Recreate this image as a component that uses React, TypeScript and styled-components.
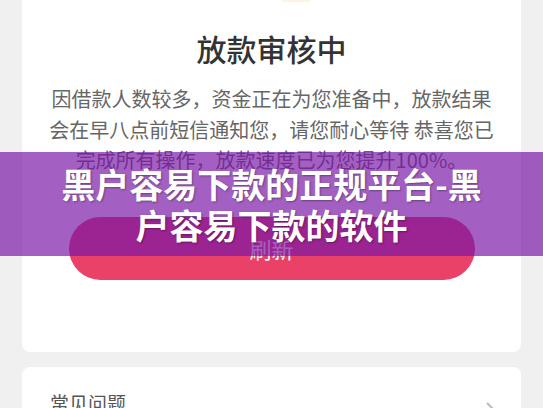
import React from 'react';
import styled, { createGlobalStyle } from 'styled-components';

const GlobalStyle = createGlobalStyle`
  html, body {
    margin: 0;
    padding: 0;
    background: #f0f0f0;
    font-family: "Noto Sans CJK SC", "Noto Sans", sans-serif;
  }
`;

const Page = styled.div`
  position: relative;
  width: 543px;
  height: 408px;
  overflow: hidden;
  background: #f0f0f0;
`;

const Column = styled.div`
  display: flex;
  flex-direction: column;
  gap: 15px;
  padding: 0 22px;
`;

const StatusCard = styled.section`
  background: #fff;
  border-radius: 0 0 8px 8px;
  height: 352px;
  display: flex;
  flex-direction: column;
  align-items: center;
  box-sizing: border-box;
`;

const IconPeek = styled.div`
  width: 28px;
  height: 2px;
  border-radius: 0 0 14px 14px;
  background: #faf5e4;
  margin-left: 48px;
`;

const Title = styled.h2`
  margin: 26px 0 0;
  font-size: 30px;
  line-height: 40px;
  font-weight: 500;
  color: #333;
`;

const Message = styled.p`
  margin: 16px 0 0;
  font-size: 20px;
  line-height: 30.5px;
  color: #666;
  text-align: center;
  white-space: nowrap;
`;

const RefreshButton = styled.button`
  margin-top: 41px;
  width: 406px;
  height: 63px;
  flex-shrink: 0;
  border: none;
  border-radius: 32px;
  background: #ea4169;
  color: #fff;
  font-family: inherit;
  font-size: 22px;
  cursor: pointer;
`;

const FaqCard = styled.section`
  background: #fff;
  border-radius: 8px;
  height: 80px;
  display: flex;
  align-items: flex-start;
  justify-content: space-between;
  padding: 22px 24px 0 28px;
  box-sizing: border-box;
`;

const FaqLabel = styled.span`
  font-size: 19px;
  color: #555;
`;

const Chevron = styled.svg`
  margin-top: 12px;
`;

const Banner = styled.div`
  position: absolute;
  left: 0;
  right: 0;
  top: 152px;
  height: 104px;
  background: rgba(120, 20, 165, 0.68);
  display: flex;
  align-items: center;
  justify-content: center;
`;

const BannerText = styled.h1`
  margin: 0;
  width: 440px;
  text-align: center;
  color: #fff;
  font-size: 34px;
  line-height: 41px;
  font-weight: 700;
  text-shadow: 1px 1px 2px rgba(0, 0, 0, 0.35);
`;

export default function App() {
  return (
    <Page>
      <GlobalStyle />
      <Column>
        <StatusCard>
          <IconPeek />
          <Title>放款审核中</Title>
          <Message>
            因借款人数较多，资金正在为您准备中，放款结果
            <br />
            会在早八点前短信通知您，请您耐心等待 恭喜您已
            <br />
            完成所有操作，放款速度已为您提升100%。
          </Message>
          <RefreshButton>刷新</RefreshButton>
        </StatusCard>
        <FaqCard>
          <FaqLabel>常见问题</FaqLabel>
          <Chevron width="12" height="18" viewBox="0 0 12 18">
            <path d="M2 2l7 7-7 7" fill="none" stroke="#bbb" strokeWidth="2" />
          </Chevron>
        </FaqCard>
      </Column>
      <Banner>
        <BannerText>黑户容易下款的正规平台-黑户容易下款的软件</BannerText>
      </Banner>
    </Page>
  );
}
